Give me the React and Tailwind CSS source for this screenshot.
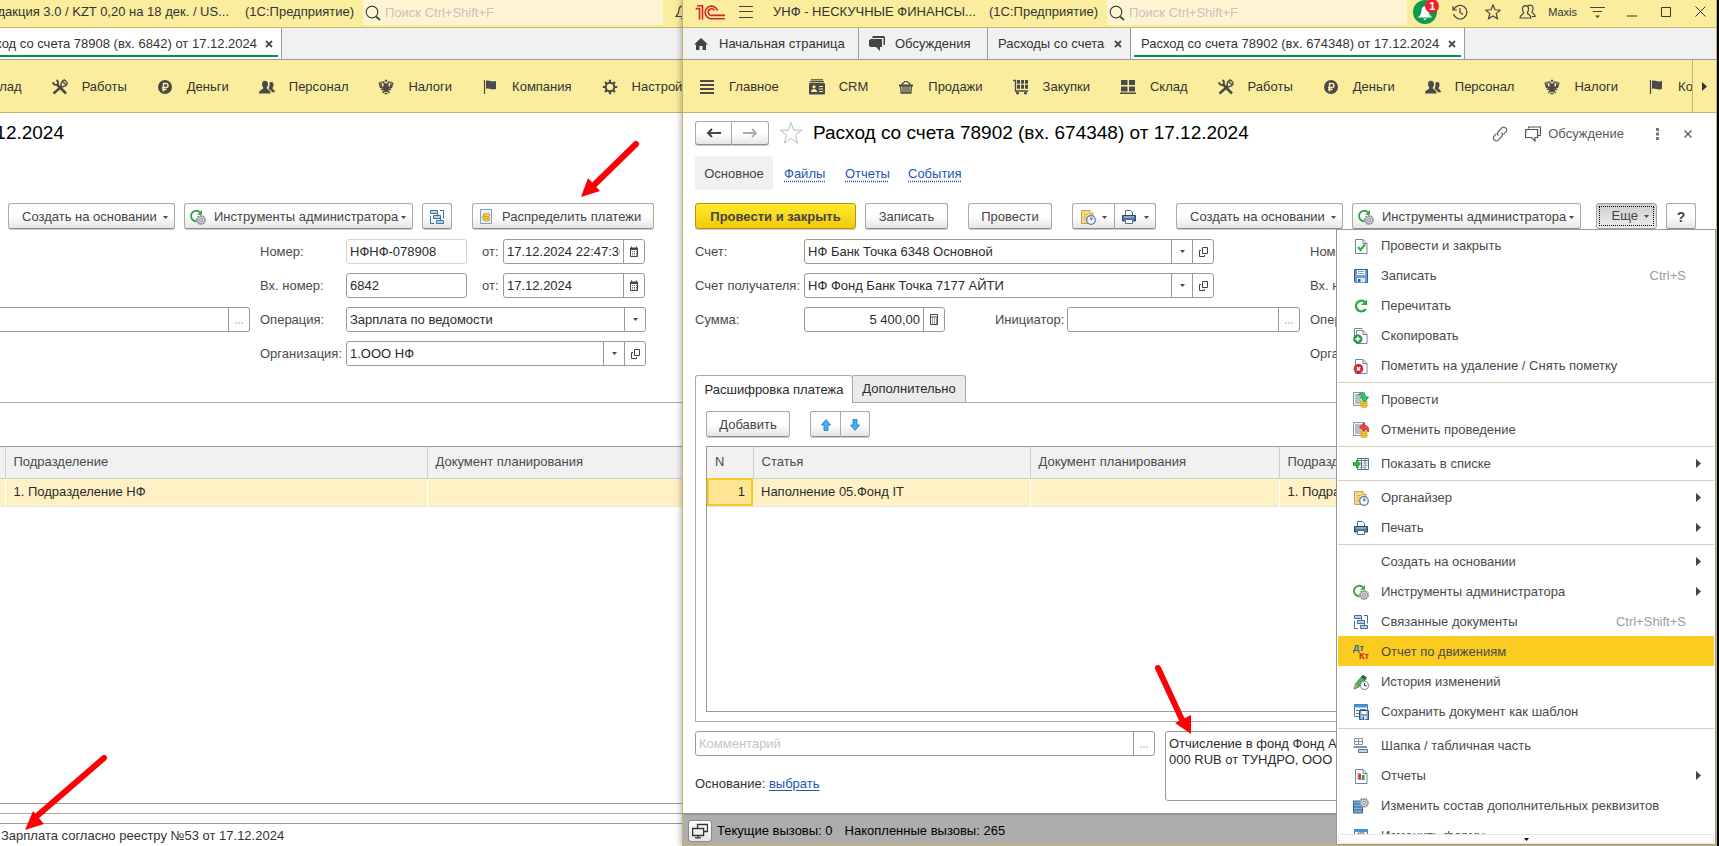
import React from "react";

const navRight = ["Главное", "CRM", "Продажи", "Закупки", "Склад", "Работы", "Деньги", "Персонал", "Налоги", "Компания"];
const navLeft = ["Работы", "Деньги", "Персонал", "Налоги", "Компания", "Настройки"];

const menuGroups = [
    [
        { label: "Провести и закрыть", icon: "docCheck" },
        { label: "Записать", icon: "floppy", hint: "Ctrl+S" },
        { label: "Перечитать", icon: "reload" },
        { label: "Скопировать", icon: "docPlus" },
        { label: "Пометить на удаление / Снять пометку", icon: "docCross" },
    ],
    [
        { label: "Провести", icon: "post" },
        { label: "Отменить проведение", icon: "unpost" },
    ],
    [{ label: "Показать в списке", icon: "showList", sub: true }],
    [
        { label: "Органайзер", icon: "organizer", sub: true },
        { label: "Печать", icon: "printer", sub: true },
    ],
    [
        { label: "Создать на основании", sub: true },
        { label: "Инструменты администратора", icon: "adminTools", sub: true },
        { label: "Связанные документы", icon: "tree", hint: "Ctrl+Shift+S" },
        { label: "Отчет по движениям", icon: "dtkt", active: true },
        { label: "История изменений", icon: "history" },
        { label: "Сохранить документ как шаблон", icon: "template" },
    ],
    [
        { label: "Шапка / табличная часть", icon: "headTable" },
        { label: "Отчеты", icon: "report", sub: true },
        { label: "Изменить состав дополнительных реквизитов", icon: "props" },
        { label: "Изменить форму", icon: "formGear" },
    ],
];

const gear = (cx, cy) => (
    <g>
        <circle cx={cx} cy={cy} r="4.2" fill="#d5d9dd" stroke="#8a9097" strokeWidth="1.6" strokeDasharray="1.7 0.9" />
        <circle cx={cx} cy={cy} r="3.6" fill="#d5d9dd" stroke="#8a9097" strokeWidth="0.8" />
        <circle cx={cx} cy={cy} r="1.4" fill="#fff" stroke="#7b8288" strokeWidth="0.9" />
    </g>
);

const page = <path d="M2.5 1.5h7.500l4 4v10h-11.500z M10 1.5v4h4" fill="#fff" stroke="#71849a" />;

const coins = (
    <g fill="#f7d64a" stroke="#c99a1c" strokeWidth="0.8">
        <ellipse cx="11" cy="14" rx="3.3" ry="1.4" />
        <ellipse cx="11" cy="12" rx="3.3" ry="1.4" />
        <ellipse cx="11" cy="10" rx="3.3" ry="1.4" />
    </g>
);

const sheet = (
    <g>
        <path d="M.5 .5h11v13H.5z" fill="#f4f6f8" stroke="#8496a8" />
        <path d="M2 3h6M2 5h6M2 7h6M2 9h6M2 11h6" stroke="#74879a" />
    </g>
);

// Цветные иконки команд, все 16x16
const icons = {
    docCheck: <>{page}<path d="M5 9l2.500 3L12 6.500" fill="none" stroke="#28b83f" strokeWidth="2.200" /></>,
    floppy: (
        <>
            <path d="M1.5 1.5h13v13h-12l-1-1z" fill="#6fa0d4" stroke="#2f5f96" />
            <path d="M4 2h8v5H4z" fill="#fff" />
            <path d="M5 3.5h6M5 5.500h6" stroke="#7fa4c8" />
            <path d="M4 10h8v4.500H4z" fill="#dfe7ee" />
            <path d="M5 11h2.500v3H5z" fill="#2f5f96" />
        </>
    ),
    reload: (
        <>
            <path d="M12.800 10.800A5.300 5.300 0 1 1 11.500 3.800" fill="none" stroke="#2ea83c" strokeWidth="2.300" />
            <path d="M8 7h6V1.500z" fill="#2ea83c" />
        </>
    ),
    docPlus: (
        <>
            <path d="M9.500 .5h-8v9" fill="none" stroke="#71849a" />
            <path d="M3.500 2.500h6.500l4 4v9H3.500z M10 2.500v4h4" fill="#fff" stroke="#71849a" />
            <circle cx="4.800" cy="11" r="4.300" fill="#2a9d43" stroke="#1b7a30" strokeWidth="0.6" />
            <path d="M4.800 8.500v5M2.300 11h5" stroke="#fff" strokeWidth="1.500" />
        </>
    ),
    docCross: (
        <>
            {page}
            <circle cx="5.500" cy="10.800" r="4.500" fill="#d8232f" stroke="#a5131d" strokeWidth="0.6" />
            <path d="M3.800 9.100l3.400 3.400M7.200 9.100l-3.400 3.400" stroke="#fff" strokeWidth="1.500" />
        </>
    ),
    post: (
        <>
            {sheet}
            {coins}
            <path d="M5.500 3C6 .5 12 0 13 5h2.700L11.500 10 7.500 5h2.300C9 3 7 2.300 5.500 3z" fill="#25d36a" stroke="#12873a" strokeWidth="0.8" />
        </>
    ),
    unpost: (
        <>
            {sheet}
            {coins}
            <path d="M6.500 5L11 .8v2.400c4 .3 5.500 3.500 4.200 6.800-.6-2-2-3-4.200-2.800v2.400z" fill="#f0463f" stroke="#b5201c" strokeWidth="0.8" />
        </>
    ),
    showList: (
        <>
            <path d="M4.500 2.500h11v11h-11z" fill="#fff" stroke="#5f7286" />
            <path d="M5 4.500h10M8.500 3v10.500M12 3v10.500" stroke="#5f7286" />
            <path d="M5 7h3M9 7h3M12.500 7h2.500M9 9.500h3M12.500 9.500h2.500M5 11.500h3M9 11.500h3" stroke="#a9b6c3" />
            <path d="M.3 6.500H3.500V4l4 4-4 4V9.500H.3z" fill="#1fc532" stroke="#0f7f1f" strokeWidth="0.7" />
        </>
    ),
    organizer: (
        <>
            <path d="M1.500 1.500h8.500l3 3v10H1.500z" fill="#f5d98b" stroke="#cda348" />
            <path d="M10 1.500v3h3" fill="#fff" stroke="#cda348" />
            <path d="M3.500 5.500h5M3.500 8h4M3.500 10.500h3" stroke="#d8b564" />
            <circle cx="11" cy="11" r="4.300" fill="#eef4fb" stroke="#4a7db5" strokeWidth="1.200" />
            <path d="M11 11V8.300" stroke="#345" />
            <path d="M11 11l2-1.500" stroke="#d33" />
        </>
    ),
    printer: (
        <>
            <path d="M4.500 6V1.500h5l2 2V6" fill="#fff" stroke="#4c6d8c" />
            <path d="M1.500 6.500h13V12h-13z" fill="#4f7ba6" stroke="#264b70" />
            <path d="M3 8h10" stroke="#bcd3e8" />
            <path d="M4.500 10.500h7v4h-7z" fill="#fff" stroke="#4c6d8c" />
        </>
    ),
    adminTools: (
        <>
            <path d="M6.500 12.300A5.300 5.300 0 1 1 10 3.200" fill="none" stroke="#36a84a" strokeWidth="1.900" />
            <path d="M7 5.800h5V1z" fill="#36a84a" />
            {gear(11, 11)}
        </>
    ),
    tree: (
        <g fill="#bcd3e6" stroke="#3f6f9a">
            <path d="M1.500 1.500h7v3h-7z" />
            <path d="M4.500 6.500h7v3h-7z" />
            <path d="M7.500 11.500h7v3h-7z" />
            <path d="M11 1.500h3.500v8M1.500 6.500v8H5M8.500 4.500v2M11.500 9.500v2" fill="none" />
        </g>
    ),
    history: (
        <>
            <path d="M1 15l1.500-5L8.500 2.500l4 3L6 13z" fill="#4fae5c" stroke="#2e7a3b" strokeWidth="0.7" />
            <path d="M8 3L10 .8l4 2.700-2 2.700z" fill="#4b5158" />
            <path d="M1 15l1.500-4.500 3 2z" fill="#e3b778" stroke="#8a6a3a" strokeWidth="0.5" />
            <circle cx="11.500" cy="11.500" r="4" fill="#fff" stroke="#7c93a9" strokeWidth="1.100" />
            <path d="M11.500 9v2.800h2.200" fill="none" stroke="#333" />
        </>
    ),
    template: (
        <>
            <path d="M1.500 .5h13v12h-13z" fill="#fff" stroke="#3f7fb9" />
            <path d="M1.500 .5h13v3h-13z" fill="#3f97dc" />
            <path d="M3 6.500h3M3 9.500h3M7 5.500h6" stroke="#66788a" />
            <path d="M6.500 6.500h9v9h-9z" fill="#7fa3c8" stroke="#2f5275" />
            <path d="M8.500 7h5v3h-5z" fill="#fff" />
            <path d="M8.500 12h5v3.500h-5z" fill="#dfe7ee" />
            <path d="M9.500 12.500H11v3H9.500z" fill="#2f5275" />
        </>
    ),
    headTable: (
        <>
            <path d="M1.500 .5h8v6h-8zM5.500 .5v6M1.500 3.500h8" fill="#fff" stroke="#8a9096" />
            <path d="M.5 9H14" stroke="#2f4f75" strokeWidth="1.200" />
            <path d="M5.500 11.500h9v3h-9z" fill="#c3d3e0" stroke="#5b7791" />
        </>
    ),
    report: (
        <>
            {page}
            <path d="M5 5v6.500h7" fill="none" stroke="#8896a5" />
            <path d="M5.500 5.500h2.500V11H5.500z" fill="#e02b2b" />
            <path d="M9 7h2.500v4H9z" fill="#1f9e37" />
        </>
    ),
    props: (
        <>
            <path d="M.5 3h9v12h-9z" fill="#83b0da" stroke="#2f6394" />
            <path d="M1 6h8.500M1 9h8.500M1 12h8.500" stroke="#2f6394" />
            {gear(11, 4.800)}
        </>
    ),
    formGear: (
        <>
            <path d="M1.500 1.500h13v13h-13z" fill="#fff" stroke="#3f7fb9" />
            <path d="M1.500 1.500h13v2.500h-13z" fill="#3f97dc" />
            {gear(8, 8.500)}
        </>
    ),
    coinsDoc: (
        <>
            <path d="M2.500 .5h11v14h-11z" fill="#e8f1fa" stroke="#7f9fc0" />
            <g fill="#f7cf3c" stroke="#c48f14" strokeWidth="0.8">
                <ellipse cx="8.500" cy="10.500" rx="3.500" ry="1.500" />
                <ellipse cx="7.500" cy="8.200" rx="3.500" ry="1.500" />
                <ellipse cx="8.500" cy="6" rx="3.500" ry="1.500" />
            </g>
        </>
    ),
};

function CmdIcon({ name }) {
    if (!name) return <span className="w-4 shrink-0" />;
    if (name === "dtkt") {
        return (
            <span className="flex h-4 w-4 shrink-0 flex-col text-[9px] leading-2 font-bold">
                <span className="text-[#2f6394]">Дт</span>
                <span className="self-end text-[#c8201c]">Кт</span>
            </span>
        );
    }
    return <svg className="h-4 w-4 shrink-0" viewBox="0 0 16 16">{icons[name]}</svg>;
}

// Монохромные иконки разделов
const navIcons = {
    "Главное": <path d="M1 2h14M1 6h14M1 10h14M1 14h14" stroke="#4a4a4a" strokeWidth="2" />,
    "CRM": (
        <>
            <path d="M2 .8h12" stroke="#4a4a4a" strokeWidth="1.200" />
            <path d="M1 2h14v1.300H1z" fill="#4a4a4a" />
            <rect x="0" y="4" width="16" height="11.500" rx="1" fill="#4a4a4a" />
            <circle cx="5" cy="7.800" r="1.600" fill="#fbed9e" />
            <path d="M2 13c0-4 6-4 6 0z" fill="#fbed9e" />
            <path d="M10 7.500h4M10 10h4M10 12.500h4" stroke="#fbed9e" />
        </>
    ),
    "Продажи": (
        <g stroke="#4a4a4a" fill="none">
            <path d="M1 6.500h14" strokeWidth="2" />
            <path d="M3.500 6L6.500 2.500M12.500 6L9.500 2.500M6 2.500h4" strokeWidth="1.200" />
            <path d="M2.500 7l.6 7h9.800l.6-7M5 7v7M7 7v7M9 7v7M11 7v7" strokeWidth="1.300" />
        </g>
    ),
    "Закупки": (
        <>
            <path d="M0 1.500h2.500v10.500h12.500" fill="none" stroke="#4a4a4a" strokeWidth="1.300" />
            <path d="M4 1h3v3.800H4zM8 1h3v3.800H8zM12 1h3v3.800h-3zM4 5.800h3V9.800H4zM8 5.800h3V9.800H8zM12 5.800h3V9.800h-3z" fill="#4a4a4a" />
            <circle cx="4.500" cy="14" r="1.500" fill="#4a4a4a" />
            <circle cx="12.500" cy="14" r="1.500" fill="#4a4a4a" />
        </>
    ),
    "Склад": <path d="M1 1h6.500v5H1zM9 1h6v5H9zM1 7.500h6.500v5H1zM9 7.500h6v5H9zM0 13.500h16v1.500H0z" fill="#4a4a4a" />,
    "Работы": (
        <g stroke="#4a4a4a" fill="none">
            <path d="M5 5.500L14 14.500" strokeWidth="2.600" />
            <path d="M1 3.200C1.500 7 6.500 7 6 2.500L4.500 1" strokeWidth="1.800" />
            <path d="M1.500 14.500L9.500 7.500" strokeWidth="2.400" />
            <path d="M9.500 7.500C8 4 10.500 1.500 12.500 1L15 3.500C15.500 6 12.500 8.500 9.500 7.500zM11 3l3 3" strokeWidth="1.400" />
        </g>
    ),
    "Деньги": (
        <>
            <circle cx="8" cy="8" r="7" fill="#4a4a4a" />
            <path d="M6.500 12.500V4.500h2.500c2.700 0 2.700 4 0 4H5M5 10.500h4.500" fill="none" stroke="#fbed9e" strokeWidth="1.400" />
        </>
    ),
    "Персонал": (
        <g fill="#4a4a4a">
            <path d="M3 5C3 .5 9 .5 9 5 9 7.200 8 8.200 7.600 9c.4 1.500 4 1.800 4 5.500H0C0 10.800 4 10.500 4.400 9 4 8.200 3 7.200 3 5z" />
            <path d="M10.500 3.500c3-1.500 4.300.5 4 3-.3 1.500-1 2-1.200 2.700.5 1.200 2.700 1.500 2.700 4h-3.200c-.5-2-2-2.700-3.300-3.300.8-1.800 1.400-3.600 1-6.400z" />
        </g>
    ),
    "Налоги": (
        <g fill="none" stroke="#4a4a4a">
            <path d="M8 5v8M6.500 5.500h3v6h-3z" strokeWidth="2" />
            <path d="M7 5.500L5.500 3 4 3.500M9 5.500L10.500 3l1.500.5M8 3V.8M6.800 1.500h2.400" strokeWidth="1.400" />
            <path d="M7 8.500L3.500 8 2.800 2.500M7 9.500L2.500 8.500 1 3.500M9 8.500l3.500-.5.700-5.500M9 9.500l4.500-1L15 3.500" strokeWidth="1.300" />
            <path d="M6.500 9.500L3 10.800M9.500 9.500l3.500 1.300M6.500 11.500L4.500 14M9.500 11.500l2 2.500M6.500 14.500h3" strokeWidth="1.400" />
        </g>
    ),
    "Компания": (
        <>
            <path d="M2.500 1v14" stroke="#4a4a4a" strokeWidth="1.200" />
            <path d="M4 2c3-1.500 5 1.500 10 0v8c-5 1.500-7-1.500-10 0z" fill="#4a4a4a" />
        </>
    ),
    "Настройки": (
        <g fill="none" stroke="#4a4a4a">
            <circle cx="8" cy="8" r="4.300" strokeWidth="2" />
            <path d="M8 .8v3M8 12.200v3M.8 8h3M12.200 8h3M3 3l2 2M11 11l2 2M13 3l-2 2M5 11l-2 2" strokeWidth="2.200" />
        </g>
    ),
};

const btnBase = "flex h-[26px] shrink-0 items-center rounded-[3px] border bg-linear-to-b pt-[2px] whitespace-nowrap text-[#444] shadow-[0_1px_0_#c9c9c9]";
const btn = `${btnBase} border-[#a9a9a9] border-b-[#8f8f8f] from-white from-50% to-[#e6e6e6]`;

function Caret() {
    return <svg className="h-[3px] w-[5px] shrink-0" viewBox="0 0 5 3"><path d="M0 0h5L2.500 3z" fill="#4a4a4a" /></svg>;
}

function NavLinks({ items }) {
    return items.map((name) => (
        <a key={name} href="#" className="flex shrink-0 items-center gap-[14px]">
            <svg className="h-4 w-4" viewBox="0 0 16 16">{navIcons[name]}</svg>
            {name}
        </a>
    ));
}

function SearchBox({ id }) {
    return (
        <div className="flex h-[25px] w-[300px] shrink-0 items-center self-start rounded-b-[3px] bg-[#fdf5d3] pl-[2px]">
            <svg className="h-4 w-4" viewBox="0 0 16 16" fill="none" stroke="#444">
                <circle cx="7" cy="7" r="5.800" strokeWidth="1.200" />
                <path d="M11 11.500l4 3.500" strokeWidth="1.800" />
            </svg>
            <input id={id} aria-label="Поиск" placeholder="Поиск Ctrl+Shift+F" className="min-w-0 flex-1 bg-transparent pl-1 outline-none placeholder:text-[#c9c4b8]" />
        </div>
    );
}

function CloseX() {
    return (
        <button type="button" aria-label="Закрыть" className="h-2 w-2 shrink-0">
            <svg viewBox="0 0 8 8"><path d="M1 1l6 6M7 1L1 7" stroke="#4a4a4a" strokeWidth="1.800" /></svg>
        </button>
    );
}

const sideIcons = {
    caret: <path d="M5 5h5L7.500 8z" fill="#4a4a4a" />,
    dots: <path d="M3.500 10h1M6.500 10h1M9.500 10h1" stroke="#555" />,
    open: <path d="M6.500 2.500h5v6h-5zM5 5.500H3.500v6h5V10" fill="none" stroke="#444" />,
    calendar: (
        <>
            <path d="M3.500 3.500h7v8h-7z" fill="none" stroke="#444" />
            <path d="M3.500 3h7v1.500h-7zM4.500 1.500v2M9.500 1.500v2" fill="#444" stroke="#444" />
            <path d="M5 6.500h5M5 8.500h5M5 10h5" stroke="#444" strokeDasharray="1 1" strokeWidth="0.8" />
        </>
    ),
    calc: (
        <>
            <path d="M3.500 1.500h7v10h-7zM3.500 4h7" fill="none" stroke="#444" />
            <path d="M5 6h5M5 8h5M5 10h5" stroke="#444" strokeDasharray="1 1" />
        </>
    ),
};

const sideLabels = { caret: "Выбрать из списка", dots: "Выбрать", open: "Открыть", calendar: "Календарь", calc: "Калькулятор" };

function Field({ id, value, placeholder, sides = [], className = "", align = "", label }) {
    return (
        <div className={`flex h-[25px] shrink-0 rounded-[3px] border bg-white ${className}`}>
            <input id={id} aria-label={label} defaultValue={value} placeholder={placeholder} className={`min-w-0 flex-1 px-[3px] text-[#2b2b2b] outline-none placeholder:text-[#c4c4c4] ${align}`} />
            {sides.map((s) => (
                <button key={s} type="button" aria-label={sideLabels[s]} className="flex w-[21px] items-center justify-center border-l border-[#9a9a9a]">
                    <svg className="h-[14px] w-[14px]" viewBox="0 0 14 14">{sideIcons[s]}</svg>
                </button>
            ))}
        </div>
    );
}

function MoreMenu() {
    return (
        <div className="absolute top-[26px] right-0 bottom-0 z-10 flex w-[380px] flex-col border border-[#9a9a9a] bg-white px-px">
            <div className="min-h-0 flex-1 basis-0 overflow-hidden">
                {menuGroups.map((group, i) => (
                    <div key={i} className={i > 0 ? "mt-[2px] border-t border-[#d6d2bd] pt-px" : ""}>
                        {group.map((item) => (
                            <button
                                key={item.label}
                                type="button"
                                className={`flex h-[30px] w-full items-center gap-3 pt-px pr-[13px] pl-[15px] text-left text-[#4a4a4a] ${item.active ? "bg-[#facc1f]" : ""}`}
                            >
                                <CmdIcon name={item.icon} />
                                <span className="flex-1 whitespace-nowrap">{item.label}</span>
                                {item.hint && <span className="mr-[15px] text-[#9c9c9c]">{item.hint}</span>}
                                {item.sub && <svg className="h-[9px] w-[5px]" viewBox="0 0 5 9"><path d="M0 0l5 4.500L0 9z" fill="#444" /></svg>}
                            </button>
                        ))}
                    </div>
                ))}
            </div>
            <button type="button" aria-label="Прокрутить вниз" className="flex h-[10px] shrink-0 items-center justify-center rounded-[2px] border border-[#e4e4e4]">
                <svg className="h-[3px] w-[5px]" viewBox="0 0 5 3"><path d="M0 0h5L2.500 3z" fill="#000" /></svg>
            </button>
        </div>
    );
}

function LeftWindow() {
    return (
        <section className="flex min-w-0 flex-col overflow-hidden bg-white">
            <header className="flex h-7 shrink-0 items-center border-b border-[#c4b56a] bg-[#fbed9e] pb-1">
                <div className="flex w-[229px] shrink-0 justify-end overflow-hidden whitespace-nowrap">
                    <span>УНФ - НЕСКУЧНЫЕ ФИНАНСЫ, редакция 3.0 / KZT 0,20 на 18 дек. / US...</span>
                </div>
                <span className="ml-4 w-[118px] shrink-0">(1С:Предприятие)</span>
                <SearchBox id="search-left" />
                <svg className="ml-3 h-4 w-4 shrink-0" viewBox="0 0 16 16" fill="none" stroke="#444" strokeWidth="1.200">
                    <path d="M1 12.500h14c-2-2-3-3-3-6.500 0-2.500-1.500-4-4-4S4 3.500 4 6c0 3.500-1 4.500-3 6.500zM6 14.500h4" />
                </svg>
            </header>
            <div className="flex h-8 shrink-0 border-b border-[#9a9a9a] bg-[#f1f1f1]">
                <div className="flex w-[282px] shrink-0 flex-col border-r border-[#9a9a9a] bg-white">
                    <div className="flex flex-1 items-center justify-end gap-2 overflow-hidden pt-1 pr-2 whitespace-nowrap">
                        <span className="shrink-0">Расход со счета 78908 (вх. 6842) от 17.12.2024</span>
                        <CloseX />
                    </div>
                    <div className="mr-[3px] mb-[2px] h-[2px] bg-[#009646]" />
                </div>
            </div>
            <nav className="-ml-4 flex h-[53px] shrink-0 items-center gap-[30px] border-b border-[#c4b56a] bg-[#fbed9e] pt-px">
                <a href="#" className="shrink-0">Склад</a>
                <NavLinks items={navLeft} />
            </nav>

            <div className="flex flex-1 flex-col pt-2">
                <div className="flex h-6 w-16 items-center justify-end overflow-hidden">
                    <h1 className="shrink-0 text-[19px] leading-6 whitespace-nowrap text-black">Расход со счета 78908 (вх. 6842) от 17.12.2024</h1>
                </div>

                <div className="mt-[58px] flex pl-2">
                    <button type="button" className={`${btn} w-[167px] justify-between pr-[6px] pl-[13px]`}>Создать на основании <Caret /></button>
                    <button type="button" className={`${btn} ml-[9px] w-[229px] pr-[6px] pl-[5px]`}>
                        <CmdIcon name="adminTools" />
                        <span className="ml-2 flex-1 text-left">Инструменты администратора</span>
                        <Caret />
                    </button>
                    <button type="button" aria-label="Связанные документы" className={`${btn} ml-[9px] w-[30px] justify-center`}><CmdIcon name="tree" /></button>
                    <button type="button" className={`${btn} ml-5 w-[182px] gap-2 pl-[5px]`}><CmdIcon name="coinsDoc" />Распределить платежи</button>
                </div>

                <div className="mt-[10px] flex text-[#4a4a4a]">
                    <div className="w-[250px] shrink-0 pt-[68px]">
                        <Field id="l-init" label="Инициатор" sides={["dots"]} className="rounded-l-none border-l-0 border-[#9a9a9a]" />
                    </div>
                    <div className="ml-[10px] flex flex-col gap-[9px]">
                        <div className="flex items-center">
                            <label htmlFor="l-num" className="w-[86px] shrink-0">Номер:</label>
                            <Field id="l-num" value="НФНФ-078908" className="w-[121px] border-[#d4d4d4]" />
                            <label htmlFor="l-date" className="ml-[15px] w-[21px] shrink-0">от:</label>
                            <Field id="l-date" value="17.12.2024 22:47:36" sides={["calendar"]} className="w-[142px] border-[#9a9a9a]" />
                        </div>
                        <div className="flex items-center">
                            <label htmlFor="l-innum" className="w-[86px] shrink-0">Вх. номер:</label>
                            <Field id="l-innum" value="6842" className="w-[121px] border-[#9a9a9a]" />
                            <label htmlFor="l-indate" className="ml-[15px] w-[21px] shrink-0">от:</label>
                            <Field id="l-indate" value="17.12.2024" sides={["calendar"]} className="w-[142px] border-[#9a9a9a]" />
                        </div>
                        <div className="flex items-center">
                            <label htmlFor="l-op" className="w-[86px] shrink-0">Операция:</label>
                            <div className="flex h-[25px] w-[300px] shrink-0 rounded-[3px] border border-[#9a9a9a]">
                                <select id="l-op" className="flex-1 appearance-none px-[3px] text-[#2b2b2b] outline-none">
                                    <option>Зарплата по ведомости</option>
                                </select>
                                <span className="pointer-events-none flex w-[21px] items-center justify-center border-l border-[#9a9a9a]">
                                    <svg className="h-[14px] w-[14px]" viewBox="0 0 14 14">{sideIcons.caret}</svg>
                                </span>
                            </div>
                        </div>
                        <div className="flex items-center">
                            <label htmlFor="l-org" className="w-[86px] shrink-0">Организация:</label>
                            <Field id="l-org" value="1.ООО НФ" sides={["caret", "open"]} className="w-[300px] border-[#9a9a9a]" />
                        </div>
                    </div>
                </div>

                <div className="mt-9 flex flex-1 flex-col border-y border-[#a9a9a9] pt-[43px] pb-[9px]">
                    <div className="flex-1 border-y border-[#9a9a9a]">
                        <table className="w-full table-fixed border-collapse text-left">
                            <colgroup>
                                <col className="w-[5px]" />
                                <col className="w-[422px]" />
                                <col />
                            </colgroup>
                            <thead>
                                <tr className="h-[31px] border-b border-[#cfcfcf] bg-[#f1f1f1] text-[#4a4a4a]">
                                    <th className="border-r border-[#cfcfcf]" />
                                    <th className="border-r border-[#cfcfcf] pl-2 font-normal">Подразделение</th>
                                    <th className="pl-2 font-normal">Документ планирования</th>
                                </tr>
                            </thead>
                            <tbody>
                                <tr className="h-7 border-b border-[#e4e4e4] bg-[#fff1c6] text-[#2b2b2b]">
                                    <td className="border-r border-white" />
                                    <td className="border-r border-white pl-2">1. Подразделение НФ</td>
                                    <td />
                                </tr>
                            </tbody>
                        </table>
                    </div>
                </div>
                <textarea
                    aria-label="Назначение платежа"
                    rows={1}
                    defaultValue="Зарплата согласно реестру №53 от 17.12.2024"
                    className="mt-[9px] h-[23px] w-full shrink-0 resize-none overflow-hidden border-t border-[#9a9a9a] pt-1 pl-px leading-4 outline-none"
                />
            </div>
        </section>
    );
}

function RightWindow() {
    return (
        <section className="relative z-10 flex min-w-0 flex-col border-x border-b border-[#c4b56a] bg-white shadow-[-1px_0_6px_rgba(0,0,0,0.3)]">
            <header className="flex h-7 shrink-0 items-center border-b border-[#c4b56a] bg-[#fbed9e] pr-[10px] pb-1 pl-3">
                <svg className="h-4 w-[31px] shrink-0" viewBox="0 0 31 16" fill="none" stroke="#d6222b" strokeWidth="1.600">
                    <path d="M1 5.500L1.500 4.500H4.500V15.500M2 1.800H7.500V15.500" />
                    <path d="M22.500 6.500A6.300 6.300 0 1 0 17 14.700H30" />
                    <path d="M19.500 6.500A3.300 3.300 0 1 0 17 11.400H30" />
                </svg>
                <button type="button" aria-label="Меню" className="ml-[13px] flex h-[12px] w-[14px] shrink-0 flex-col justify-between">
                    <span className="h-px w-full bg-[#444]" />
                    <span className="h-px w-full bg-[#444]" />
                    <span className="h-px w-full bg-[#444]" />
                </button>
                <span className="ml-5 w-[216px] shrink-0 whitespace-nowrap">УНФ - НЕСКУЧНЫЕ ФИНАНСЫ...</span>
                <span className="w-[118px] shrink-0">(1С:Предприятие)</span>
                <SearchBox id="search-right" />
                <div className="ml-auto flex items-center">
                    <button type="button" aria-label="Уведомления" className="relative h-6 w-6 rounded-full bg-[#0d9a4c]">
                        <svg className="h-6 w-6" viewBox="0 0 24 24"><path d="M4.500 17.500c3-2 4-4 4-7.500 0-5 7-5 7 0 0 3.500 1 5.500 4 7.500zM10 18.500h4l-2 1.800z" fill="#fff" /></svg>
                        <span className="absolute -top-px -right-[2px] flex h-[14px] w-[14px] items-center justify-center rounded-full bg-[#ee2229] text-[11px] font-bold text-white">1</span>
                    </button>
                    <svg className="ml-[15px] h-4 w-4" viewBox="0 0 16 16" fill="none" stroke="#444" strokeWidth="1.200">
                        <path d="M1.800 5.500A6.800 6.800 0 1 1 1.500 10M1 2v4h4M8 4v4.500l3 2" />
                    </svg>
                    <svg className="ml-[17px] h-4 w-4" viewBox="0 0 16 16" fill="none" stroke="#444" strokeWidth="1.200">
                        <path d="M8 1l2 4.800 5.200.4-4 3.400 1.300 5.100L8 12l-4.500 2.700 1.300-5.100-4-3.400L6 5.800z" />
                    </svg>
                    <svg className="ml-[18px] h-4 w-[17px]" viewBox="0 0 17 16" fill="none" stroke="#444" strokeWidth="1.200">
                        <path d="M3.500 5c0-4.500 6-4.500 6 0 0 2-.8 3-1.200 3.800.3 2 3.700 1.700 3.700 5.200H1c0-3.500 3.500-3.200 3.700-5.200C4.300 8 3.500 7 3.500 5zM9 2c2.500-2 5.500-.5 5 3-.2 1.500-.8 2-1 3 .3 1.500 3.200 1.700 3.200 4.500H13" />
                    </svg>
                    <span className="ml-3 text-[11px]">Maxis</span>
                    <svg className="ml-[13px] h-[14px] w-[15px]" viewBox="0 0 15 14"><path d="M0 2.500h15M3 6.500h9" stroke="#444" strokeWidth="1.200" /><path d="M5 10.500h5L7.500 13z" fill="#444" /></svg>
                    <svg className="ml-[22px] h-[10px] w-[10px]" viewBox="0 0 10 10"><path d="M0 9h10" stroke="#333" /></svg>
                    <svg className="ml-6 h-[10px] w-[10px]" viewBox="0 0 10 10"><path d="M.5 .5h9v9h-9z" fill="none" stroke="#333" /></svg>
                    <svg className="ml-6 h-[11px] w-[11px]" viewBox="0 0 11 11"><path d="M.5 .5l10 10M10.500 .5l-10 10" stroke="#333" /></svg>
                </div>
            </header>
            <div className="flex h-8 shrink-0 border-b border-[#9a9a9a] bg-[#f1f1f1] whitespace-nowrap">
                <a href="#" className="flex w-[176px] shrink-0 items-center gap-[10px] border-r border-[#9a9a9a] pl-[10px]">
                    <svg className="h-[14px] w-4" viewBox="0 0 16 14"><path d="M8 1l7 6.500h-2V13H9.500V9h-3v4H3V7.500H1z" fill="#444" /></svg>
                    Начальная страница
                </a>
                <a href="#" className="flex w-[129px] shrink-0 items-center gap-[10px] border-r border-[#9a9a9a] pl-[10px]">
                    <svg className="h-4 w-4" viewBox="0 0 16 16"><path d="M4 0h11l1 1v8h-1.500V2H3zM1.500 3H13v8h-2v4l-4-4H1.500L0 10V4.500z" fill="#444" /></svg>
                    Обсуждения
                </a>
                <div className="flex w-[143px] shrink-0 items-center justify-between border-r border-[#9a9a9a] pr-2 pl-[10px]">
                    <span>Расходы со счета</span>
                    <CloseX />
                </div>
                <div className="flex w-[334px] shrink-0 flex-col border-r border-[#9a9a9a] bg-white">
                    <div className="flex flex-1 items-center justify-between pt-1 pr-2 pl-[10px]">
                        <span>Расход со счета 78902 (вх. 674348) от 17.12.2024</span>
                        <CloseX />
                    </div>
                    <div className="mx-[3px] mb-[2px] h-[2px] bg-[#009646]" />
                </div>
            </div>
            <div className="flex h-[53px] shrink-0 border-b border-[#c4b56a] bg-[#fbed9e]">
                <nav className="flex min-w-0 flex-1 items-center gap-[30px] overflow-hidden pt-px pl-4">
                    <NavLinks items={navRight} />
                </nav>
                <button type="button" aria-label="Дальше" className="flex w-6 items-center justify-center border-l border-[#c4b56a]">
                    <svg className="h-[9px] w-[5px]" viewBox="0 0 5 9"><path d="M0 0l5 4.500L0 9z" fill="#333" /></svg>
                </button>
            </div>

            <div className="flex h-8 shrink-0 items-end pr-6 pl-3">
                <button type="button" aria-label="Назад" className="flex h-6 w-[37px] shrink-0 items-center justify-center rounded-l-[3px] border border-[#a9a9a9] border-b-[#8f8f8f] bg-linear-to-b from-white from-50% to-[#e6e6e6] shadow-[0_1px_0_#c9c9c9]">
                    <svg className="h-3 w-4" viewBox="0 0 16 12"><path d="M2 6h13M6 2L2 6l4 4" fill="none" stroke="#444" strokeWidth="2" /></svg>
                </button>
                <button type="button" aria-label="Вперед" className="flex h-6 w-[37px] shrink-0 items-center justify-center rounded-r-[3px] border border-l-0 border-[#a9a9a9] border-b-[#8f8f8f] bg-linear-to-b from-white from-50% to-[#e6e6e6] shadow-[0_1px_0_#c9c9c9]">
                    <svg className="h-3 w-4" viewBox="0 0 16 12"><path d="M1 6h13M10 2l4 4-4 4" fill="none" stroke="#aaa" strokeWidth="1.800" /></svg>
                </button>
                <svg className="ml-[10px] h-6 w-6 shrink-0" viewBox="0 0 24 24"><path d="M12 1.500l2.700 7.700h8l-6.300 4.900 2.300 8L12 17.400l-6.700 4.700 2.300-8L1.300 9.200h8z" fill="#fff" stroke="#b4bcc4" /></svg>
                <h1 className="ml-[10px] text-[19px] leading-6 whitespace-nowrap text-black">Расход со счета 78902 (вх. 674348) от 17.12.2024</h1>
                <div className="ml-auto flex h-6 items-center pt-[2px] text-[#5a5a5a]">
                    <svg className="h-4 w-4" viewBox="0 0 16 16" fill="none" stroke="#666" strokeWidth="1.200">
                        <path d="M6.500 9.500C5 8 5.500 6.500 6.500 5.500l3-3.300c2.700-2.700 6.700 1 4.300 3.800l-2.300 2.300M9.500 6.500c1.500 1.500 1 3 0 4l-3 3.300c-2.700 2.700-6.700-1-4.300-3.800l2.300-2.300" />
                    </svg>
                    <svg className="mr-[7px] ml-[17px] h-4 w-4" viewBox="0 0 16 16" fill="none" stroke="#555" strokeWidth="1.200">
                        <path d="M3.500 2.500V1h12v8.500H13M.6 3.500h12v8H10v3.500l-3.500-3.500H.6z" />
                    </svg>
                    <span>Обсуждение</span>
                    <svg className="ml-8 h-3 w-[3px]" viewBox="0 0 3 12"><path d="M0 0h3v3H0zM0 4.500h3v3H0zM0 9h3v3H0z" fill="#777" /></svg>
                    <svg className="ml-[25px] h-2 w-2" viewBox="0 0 8 8"><path d="M.5 .5l7 7M7.500 .5l-7 7" stroke="#555" strokeWidth="1.200" /></svg>
                </div>
            </div>

            <div className="mt-[11px] flex h-[34px] shrink-0 items-center pl-3 text-[#2257b5]">
                <span className="flex h-[34px] w-[78px] items-center justify-center rounded-[3px] bg-[#f1f1f1] pt-px text-[#444]">Основное</span>
                <a href="#" className="ml-[11px] w-[61px] pt-px underline decoration-dotted underline-offset-3">Файлы</a>
                <a href="#" className="w-[63px] pt-px underline decoration-dotted underline-offset-3">Отчеты</a>
                <a href="#" className="pt-px underline decoration-dotted underline-offset-3">События</a>
            </div>

            <div className="relative mt-[13px] flex flex-1 flex-col">
                <div className="flex shrink-0 pr-5 pl-3">
                    <button type="button" className={`${btnBase} w-[161px] justify-center border-[#ab9613] from-[#ffea2e] to-[#f3ca00] font-bold`}>Провести и закрыть</button>
                    <button type="button" className={`${btn} ml-[9px] w-[83px] justify-center`}>Записать</button>
                    <button type="button" className={`${btn} ml-5 w-[84px] justify-center`}>Провести</button>
                    <button type="button" aria-label="Органайзер" className={`${btn} ml-5 w-[43px] justify-between rounded-r-none px-[7px]`}><CmdIcon name="organizer" /><Caret /></button>
                    <button type="button" aria-label="Печать" className={`${btn} w-[41px] justify-between rounded-l-none border-l-0 px-[6px]`}><CmdIcon name="printer" /><Caret /></button>
                    <button type="button" className={`${btn} ml-5 w-[167px] justify-between pr-[6px] pl-[13px]`}>Создать на основании <Caret /></button>
                    <button type="button" className={`${btn} ml-[9px] w-[229px] pr-[6px] pl-[5px]`}>
                        <CmdIcon name="adminTools" />
                        <span className="ml-2 flex-1 text-left">Инструменты администратора</span>
                        <Caret />
                    </button>
                    <button type="button" className="ml-auto flex h-[26px] w-[61px] shrink-0 rounded-[3px] border border-[#a0a0a0] bg-linear-to-b from-[#cfcfcf] to-[#ededed] p-[2px] text-[#444]">
                        <span className="flex h-full w-full items-center justify-end gap-[6px] border border-dotted border-black pr-1">Еще <Caret /></span>
                    </button>
                    <button type="button" className={`${btn} ml-[9px] w-[30px] justify-center text-[14px] font-bold`}>?</button>
                </div>

                <div className="mt-[10px] flex gap-[10px] overflow-hidden pl-3 text-[#4a4a4a]">
                    <div className="flex w-[605px] shrink-0 flex-col gap-[9px]">
                        <div className="flex items-center">
                            <label htmlFor="acc" className="w-[109px]">Счет:</label>
                            <Field id="acc" value="НФ Банк Точка 6348 Основной" sides={["caret", "open"]} className="w-[410px] border-[#9a9a9a]" />
                        </div>
                        <div className="flex items-center">
                            <label htmlFor="acc2" className="w-[109px] whitespace-nowrap">Счет получателя:</label>
                            <Field id="acc2" value="НФ Фонд Банк Точка 7177 АЙТИ" sides={["caret", "open"]} className="w-[410px] border-[#9a9a9a]" />
                        </div>
                        <div className="flex items-center">
                            <label htmlFor="sum" className="w-[109px]">Сумма:</label>
                            <Field id="sum" value="5 400,00" sides={["calc"]} align="text-right" className="w-[141px] border-[#9a9a9a]" />
                            <label htmlFor="init" className="ml-[50px] w-[72px]">Инициатор:</label>
                            <Field id="init" sides={["dots"]} className="w-[233px] border-[#9a9a9a]" />
                        </div>
                    </div>
                    <div className="flex flex-col gap-[9px] whitespace-nowrap">
                        {["Номер:", "Вх. номер:", "Операция:", "Организация:"].map((t) => (
                            <span key={t} className="flex h-[25px] items-center">{t}</span>
                        ))}
                    </div>
                </div>

                <div className="mt-[9px] flex shrink-0 pl-3 text-[#2b2b2b]">
                    <button type="button" className="relative z-10 -mb-px h-7 w-[158px] rounded-t-[3px] border border-b-0 border-[#a9a9a9] bg-white">Расшифровка платежа</button>
                    <button type="button" className="h-[27px] w-[113px] rounded-tr-[3px] border border-b-0 border-l-0 border-[#a9a9a9] bg-[#ebebeb]">Дополнительно</button>
                </div>
                <div className="ml-3 flex flex-1 flex-col border border-r-0 border-[#a9a9a9] pt-2 pb-[9px] pl-[10px]">
                    <div className="flex">
                        <button type="button" className={`${btn} w-[84px] justify-center`}>Добавить</button>
                        <button type="button" aria-label="Вверх" className={`${btn} ml-5 w-[31px] justify-center rounded-r-none`}>
                            <svg className="h-3 w-3" viewBox="0 0 12 12"><path d="M6 .5L10.500 6H8v5.500H4V6H1.500z" fill="#3fb0f0" stroke="#1d78bd" strokeWidth="0.8" /></svg>
                        </button>
                        <button type="button" aria-label="Вниз" className={`${btn} w-[29px] justify-center rounded-l-none border-l-0`}>
                            <svg className="h-3 w-3" viewBox="0 0 12 12"><path d="M6 11.500L1.500 6H4V.5h4V6h2.500z" fill="#3fb0f0" stroke="#1d78bd" strokeWidth="0.8" /></svg>
                        </button>
                    </div>
                    <div className="mt-[9px] flex-1 border border-r-0 border-[#9a9a9a]">
                        <table className="w-full table-fixed border-collapse text-left">
                            <colgroup>
                                <col className="w-[46px]" />
                                <col className="w-[277px]" />
                                <col className="w-[249px]" />
                                <col />
                            </colgroup>
                            <thead>
                                <tr className="h-[31px] border-b border-[#cfcfcf] bg-[#f1f1f1] text-[#4a4a4a]">
                                    <th className="border-r border-[#cfcfcf] pl-2 font-normal">N</th>
                                    <th className="border-r border-[#cfcfcf] pl-2 font-normal">Статья</th>
                                    <th className="border-r border-[#cfcfcf] pl-2 font-normal">Документ планирования</th>
                                    <th className="pl-2 font-normal">Подразделение</th>
                                </tr>
                            </thead>
                            <tbody>
                                <tr className="h-7 border-b border-[#e4e4e4] bg-[#fff1c6] text-[#2b2b2b]">
                                    <td className="bg-[#fee595] pr-2 text-right outline-2 -outline-offset-2 outline-[#f9c923]">1</td>
                                    <td className="border-r border-white pl-2">Наполнение 05.Фонд IT</td>
                                    <td className="border-r border-white" />
                                    <td className="pl-2">1. Подразделение НФ</td>
                                </tr>
                            </tbody>
                        </table>
                    </div>
                </div>

                <div className="mt-[9px] flex h-[82px] shrink-0 pl-3">
                    <div className="w-[460px] shrink-0">
                        <Field id="comment" label="Комментарий" placeholder="Комментарий" sides={["dots"]} className="border-[#9a9a9a]" />
                        <p className="mt-5 leading-4">Основание: <a href="#" className="text-[#2257b5] underline underline-offset-2">выбрать</a></p>
                    </div>
                    <textarea
                        aria-label="Назначение платежа"
                        defaultValue={"Отчисление в фонд Фонд АЙТИ 5 400,00 из 90\n000 RUB от ТУНДРО, ООО НФ"}
                        className="ml-[10px] h-[70px] flex-1 resize-none rounded-[3px] border border-[#9a9a9a] px-[3px] py-1 leading-4 whitespace-pre text-[#2b2b2b] outline-none"
                    />
                </div>
                <footer className="flex h-8 shrink-0 items-center border-t-2 border-[#979797] bg-[#adadad] pt-px pl-[5px] text-black">
                    <button type="button" aria-label="Показатели" className="flex h-[22px] w-6 items-center justify-center rounded-[3px] border border-[#8a8a8a] bg-linear-to-b from-white to-[#e6e6e6]">
                        <svg className="h-4 w-4" viewBox="0 0 16 16" fill="none" stroke="#333" strokeWidth="1.300">
                            <path d="M5.500 5V1.500h10v7H12M.6 5.500h11v7H.6zM6 12.500v2M3 14.800h6" />
                        </svg>
                    </button>
                    <span className="ml-[5px]">Текущие вызовы: 0</span>
                    <span className="ml-3">Накопленные вызовы: 265</span>
                </footer>

                <MoreMenu />
            </div>
        </section>
    );
}

// Красная стрелка-указатель, рисуется поверх окон
function Pointer({ className, viewBox, line, head }) {
    return (
        <svg className={`pointer-events-none absolute z-20 ${className}`} viewBox={viewBox}>
            <path d={line} stroke="#fb0007" strokeWidth="6" strokeLinecap="round" />
            <path d={head} fill="#fb0007" />
        </svg>
    );
}

export default function App() {
    return (
        <main className="relative grid min-h-screen grid-cols-[682fr_1035fr] overflow-hidden border-r-2 border-black bg-white font-['Liberation_Sans',Arial,sans-serif] text-[13px] leading-4 text-[#333]">
            <LeftWindow />
            <RightWindow />
            <Pointer className="top-[140px] left-[580px] h-[60px] w-[62px]" viewBox="0 0 62 60" line="M56 4L13 46" head="M1 57L8 38L20 51z" />
            <Pointer className="top-[754px] left-[24px] h-[78px] w-[84px]" viewBox="0 0 84 78" line="M80 4L13 62" head="M1 76L9 57L20 70z" />
            <Pointer className="top-[664px] left-[1154px] h-[72px] w-[40px]" viewBox="0 0 40 72" line="M4 4L29 58" head="M37 70L21 59L37 51z" />
        </main>
    );
}
